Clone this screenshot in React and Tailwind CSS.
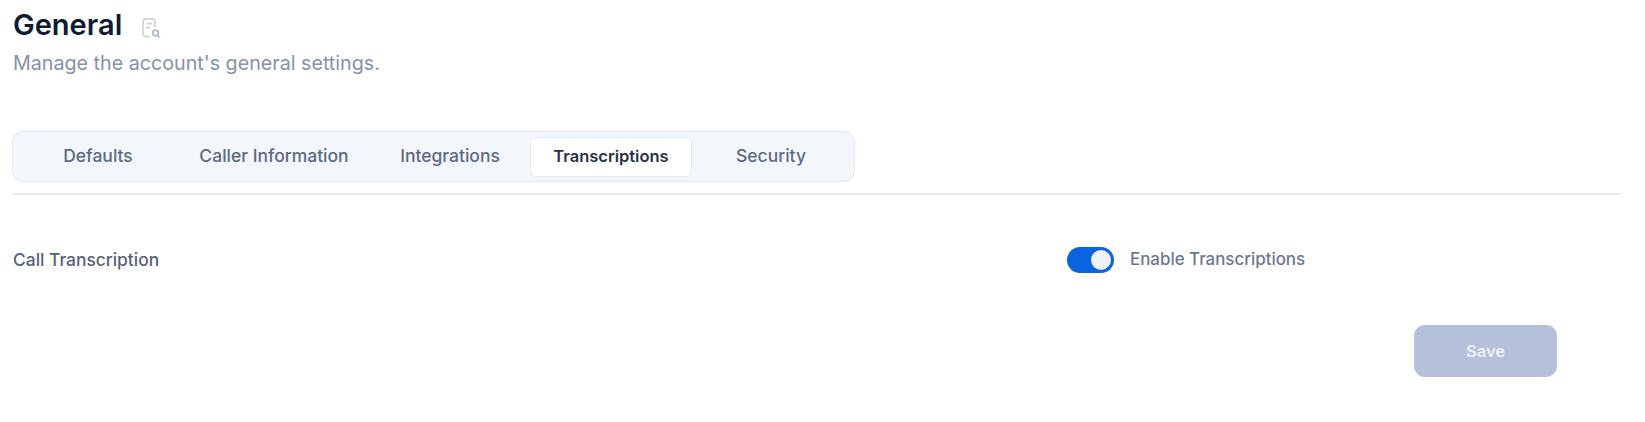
const tabs = [
  { name: 'Defaults', width: 'w-[160px]' },
  { name: 'Caller Information', width: 'w-[192px]' },
  { name: 'Integrations', width: 'w-[160px]' },
  { name: 'Transcriptions', width: 'w-[162px]', active: true },
  { name: 'Security', width: 'w-[158px]' },
];

const ReportIcon = () => (
  <svg width="19" height="20" viewBox="0 0 19 20" fill="none" stroke="#d3d8e6" strokeWidth="2" strokeLinecap="round" strokeLinejoin="round">
    <path d="M7 18.500H4A3 3 0 0 1 1 15.500V4A3 3 0 0 1 4 1h6A3 3 0 0 1 13 4V8.500" />
    <path d="M5 5.500h4.500M5 9.500h2.500" />
    <circle cx="13.500" cy="15" r="2.800" stroke="#b3bbd0" strokeWidth="1.700" />
    <path d="M15.500 17 17.500 19" stroke="#b3bbd0" strokeWidth="1.700" />
  </svg>
);

const App = () => {
  return (
    <div className="w-[1645px] h-[422px] overflow-hidden bg-white font-['Inter',sans-serif] px-3 pt-2">
      {/* Page heading */}
      <div className="flex items-center h-[34px]">
        <h1 className="ml-px text-[29px] leading-[34px] font-semibold text-[#111a33]">General</h1>
        <span className="ml-[20px] mt-[5px]"><ReportIcon /></span>
      </div>
      <p className="ml-px mt-[9px] text-[19.700px] leading-6 text-[#8592aa]">Manage the account's general settings.</p>

      {/* Tabs */}
      <div className="mt-[56px] w-[843px] h-[51px] flex items-center rounded-[11px] border border-[#e3e8f3] bg-[#f3f6fb] pl-[5px]">
        {tabs.map((tab) => (
          <button
            key={tab.name}
            className={
              tab.active
                ? `${tab.width} h-[40px] rounded-md border border-[#e6eaf3] bg-white text-[16.500px] font-semibold text-[#27324a]`
                : `${tab.width} h-[40px] text-[17.500px] font-medium text-[#5d6a82]`
            }
          >
            {tab.name}
          </button>
        ))}
      </div>
      <div className="mt-[11px] w-[1609px] border-t-2 border-[#e6ebf5]" />

      {/* Setting row */}
      <div className="mt-[52px] flex items-center h-[26px]">
        <div className="ml-px w-[1054px] text-[17.400px] font-medium text-[#55627a]">Call Transcription</div>
        <div className="flex items-center gap-[16px]">
          <div className="relative w-[47px] h-[26px] rounded-full bg-[#0a63e0]">
            <div className="absolute right-[3px] top-[3px] w-[20px] h-[20px] rounded-full bg-[#eef1f8]" />
          </div>
          <span className="text-[16.900px] font-medium text-[#6b7890]">Enable Transcriptions</span>
        </div>
      </div>

      {/* Actions */}
      <div className="mt-[52px] w-[1545px] flex justify-end">
        <button className="w-[143px] h-[52px] rounded-[11px] bg-[#b5c0db] text-[16.500px] font-semibold text-[#eef1f8]">Save</button>
      </div>
    </div>
  );
};

export default App;
